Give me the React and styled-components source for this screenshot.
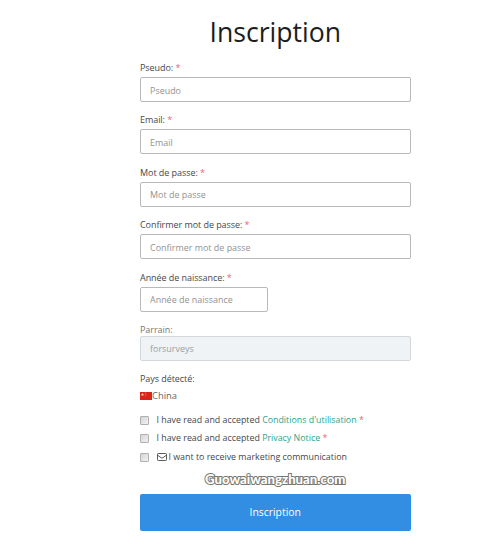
import styled, { createGlobalStyle } from "styled-components";

const GlobalStyle = createGlobalStyle`
	* {
		box-sizing: border-box;
	}

	body {
		margin: 0;
		background: #fff;
		font-family: "Open Sans", sans-serif;
		color: #45484b;
	}
`;

const Page = styled.div`
	height: 548px;
	padding: 11px 0 0 140px;
	overflow: hidden;
`;

const Form = styled.form`
	width: 270.5px;
	display: flex;
	flex-direction: column;
`;

const Title = styled.h1`
	margin: 0 0 4px;
	height: 43px;
	line-height: 43px;
	font-size: 26.6px;
	font-weight: 400;
	text-align: center;
	color: #1b1d20;
	white-space: nowrap;
`;

const Field = styled.div`
	height: ${({ $short }) => ($short ? "48.5px" : "52.45px")};
`;

const Label = styled.label`
	display: block;
	height: ${({ $tight }) => ($tight ? "15.5px" : "19px")};
	line-height: ${({ $tight }) => ($tight ? "20px" : "19px")};
	font-size: 9px;
	letter-spacing: -0.06px;
	color: ${({ $tight }) => ($tight ? "#777" : "#45484b")};
	white-space: nowrap;
`;

const Required = styled.span`
	color: #f2607a;
`;

const Input = styled.input`
	display: block;
	width: ${({ $width }) => $width || "100%"};
	height: 25px;
	padding: 1px 9px 0;
	border: 1px solid #b6babd;
	border-radius: 2px;
	background: #fff;
	font-family: inherit;
	font-size: 8.95px;
	color: #999;

	&::placeholder {
		color: #929292;
		opacity: 1;
	}

	&:disabled {
		background: #eff3f6;
		border-color: #d2d8dc;
		color: #9a9fa3;
	}
`;

const Country = styled.div`
	display: flex;
	align-items: center;
	height: 16px;
	font-size: 9.4px;
	color: #666;
`;

const Flag = styled.svg`
	display: block;
	width: 12px;
	height: 8px;
`;

const Checks = styled.div`
	margin-top: 7px;
`;

const CheckRow = styled.label`
	display: flex;
	align-items: center;
	height: 18.5px;
	font-size: 8.85px;
	white-space: nowrap;
`;

const Checkbox = styled.input`
	appearance: none;
	width: 9px;
	height: 9px;
	margin: 1px 7.5px 0 0;
	border: 1px solid #b0b0b0;
	border-radius: 1px;
	background: linear-gradient(135deg, #d5d5d5, #f2f2f2);
`;

const Link = styled.a`
	color: #2fa38c;
`;

const Envelope = styled.svg`
	width: 10px;
	height: 8px;
	margin-right: 2px;
`;

const Watermark = styled.div`
	height: 27.6px;
	line-height: 26px;
	font-family: Lato, sans-serif;
	font-size: 13.2px;
	font-weight: 900;
	text-align: center;
	color: #fff;
	-webkit-text-stroke: 2px #77776f;
	paint-order: stroke fill;
	white-space: nowrap;
`;

const Submit = styled.button`
	height: 37px;
	padding: 0;
	border: 0;
	border-radius: 2px;
	background: #328ee2;
	font-family: inherit;
	font-size: 10.4px;
	color: #fff;
`;

const fields = [
	{ label: "Pseudo", type: "text" },
	{ label: "Email", type: "email" },
	{ label: "Mot de passe", type: "password" },
	{ label: "Confirmer mot de passe", type: "password" },
	{ label: "Année de naissance", type: "text", width: "128px" },
];

function App() {
	return (
		<Page>
			<GlobalStyle />
			<Form>
				<Title>Inscription</Title>
				{fields.map(({ label, type, width }) => (
					<Field key={label}>
						<Label>
							{label}: <Required>*</Required>
						</Label>
						<Input type={type} placeholder={label} $width={width} />
					</Field>
				))}
				<Field $short>
					<Label $tight>Parrain:</Label>
					<Input defaultValue="forsurveys" disabled />
				</Field>
				<Label as="div">Pays détecté:</Label>
				<Country>
					<Flag viewBox="0 0 12 8">
						<rect width="12" height="8" fill="#d9251d" />
						<path d="M2.5 1l.4 1.1h1.2l-1 .7.4 1.2-1-.7-1 .7.4-1.2-1-.7h1.2z" fill="#ffd9a0" />
						<path d="M5 1h.8M5.6 2.4h.8M5 4h.8" stroke="#f7a37c" strokeWidth=".7" />
					</Flag>
					China
				</Country>
				<Checks>
					<CheckRow>
						<Checkbox type="checkbox" />
						<span>
							I have read and accepted <Link>Conditions d'utilisation</Link> <Required>*</Required>
						</span>
					</CheckRow>
					<CheckRow>
						<Checkbox type="checkbox" />
						<span>
							I have read and accepted <Link>Privacy Notice</Link> <Required>*</Required>
						</span>
					</CheckRow>
					<CheckRow>
						<Checkbox type="checkbox" />
						<Envelope viewBox="0 0 10 8" fill="none" stroke="#45484b" strokeWidth=".9">
							<rect x=".5" y=".5" width="9" height="7" rx=".8" />
							<path d="M.7 2.2L4 4.7q1 .7 2 0l3.3-2.5" />
						</Envelope>
						<span>I want to receive marketing communication</span>
					</CheckRow>
				</Checks>
				<Watermark>Guowaiwangzhuan.com</Watermark>
				<Submit type="button">Inscription</Submit>
			</Form>
		</Page>
	);
}

export default App;
